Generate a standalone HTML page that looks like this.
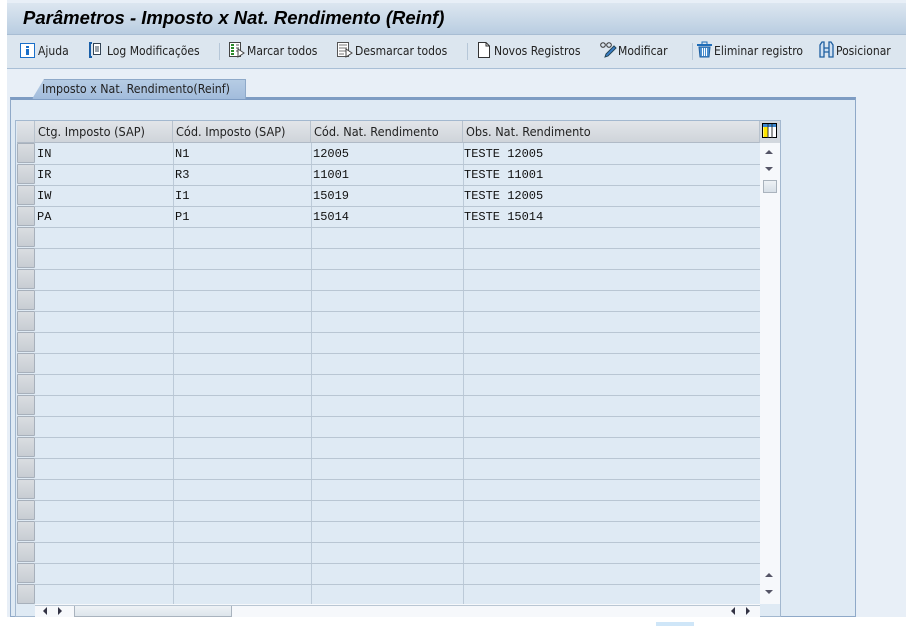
<!DOCTYPE html>
<html><head><meta charset="utf-8">
<style>
*{box-sizing:border-box;margin:0;padding:0}
body{width:906px;height:626px;overflow:hidden;background:#fff;font-family:Tahoma,"DejaVu Sans","Liberation Sans",sans-serif;font-size:12px;color:#222;position:relative}
.abs{position:absolute}
#main{left:7px;top:0;width:899px;height:617px;background:#e8eff7}
#title{left:7px;top:3px;width:899px;height:32px;background:linear-gradient(#dce6f0,#b9cde1);border-bottom:1px solid #a8bdd3}
#title span{position:absolute;left:16px;top:4px;font:bold italic 18.5px "Liberation Sans",sans-serif;color:#000}
#tb{left:7px;top:35px;width:899px;height:34px;background:#dce6ef;border-bottom:1px solid #a9bfd6}
.btn{position:absolute;top:9px;font-size:12px;color:#222;white-space:nowrap;font-family:"DejaVu Sans Condensed","DejaVu Sans",sans-serif}
.sep{position:absolute;top:8px;width:1px;height:17px;background:#b6c7d8}
#tab{left:32px;top:79px;width:214px;height:20px;background:linear-gradient(#b6cce4,#a2bcdc);border:1px solid #8ea9c9;border-bottom:none;clip-path:polygon(12px 0,100% 0,100% 100%,0 100%)}
#tab span{position:absolute;left:9px;top:2px;font-family:"DejaVu Sans Condensed","DejaVu Sans",sans-serif;font-size:12.3px}
#cont{left:10px;top:97px;width:846px;height:520px;background:#dfeaf4;border:1px solid #8fa9c8;border-top:3px solid #7e9cc3}
#grid{left:15px;top:120px;width:766px;height:497px;border:1px solid #a3b8cf;background:#dfeaf4}
.hdr{position:absolute;top:121px;height:22px;background:linear-gradient(#e2e5e9,#cfd4da);border-right:1px solid #b8c2cd;border-bottom:1px solid #b0bac6;font-family:"DejaVu Sans Condensed","DejaVu Sans",sans-serif;font-size:12.6px;padding:3px 0 0 3px;white-space:nowrap;overflow:hidden}
.rh{position:absolute;left:17px;width:18px;height:20px;background:linear-gradient(#dadde1,#c8cdd3);border:1px solid #a7b0bb;border-radius:1px}
.hl{position:absolute;left:35px;width:725px;height:1px;background:#b9c6d3}
.vl{position:absolute;top:143px;width:1px;height:461px;background:#bccad8}
.cell{position:absolute;font:12px "Liberation Mono","DejaVu Sans Mono",monospace;color:#111}
</style></head><body>
<div id="main" class="abs"></div>
<div id="title" class="abs"><span>Parâmetros - Imposto x Nat. Rendimento (Reinf)</span></div>
<div id="tb" class="abs">
 <svg class="abs" style="left:13px;top:8px" width="15" height="15"><rect x="0.5" y="0.5" width="14" height="14" fill="#fff" stroke="#1a6fc9"/><rect x="6" y="3" width="3" height="2" fill="#1a6fc9"/><rect x="6" y="6" width="3" height="6" fill="#1a6fc9"/></svg>
 <div class="btn" style="left:31px">Ajuda</div>
 <svg class="abs" style="left:82px;top:7px" width="13" height="16"><path d="M3 1H1V15H3" fill="none" stroke="#1a5fa8" stroke-width="2"/><rect x="4.5" y="1.5" width="7" height="11" fill="#fff" stroke="#345"/><path d="M6 5h4M6 7h4M6 9h4" stroke="#345"/></svg>
 <div class="btn" style="left:100px">Log Modificações</div>
 <div class="sep" style="left:212px"></div>
 <svg class="abs" style="left:222px;top:7px" width="16" height="16"><rect x="0.5" y="0.5" width="11" height="14" fill="#fff" stroke="#444"/><path d="M2 3h3M2 6h3M2 9h3M2 12h3" stroke="#2a8a2a" stroke-width="2"/><path d="M7 3h3M7 6h3M7 9h3" stroke="#555"/><path d="M9 7l6 4-6 4z" fill="#fff" stroke="#444"/></svg>
 <div class="btn" style="left:240px">Marcar todos</div>
 <svg class="abs" style="left:330px;top:7px" width="16" height="16"><rect x="0.5" y="0.5" width="11" height="14" fill="#fff" stroke="#555"/><path d="M2 3h8M2 6h8M2 9h8M2 12h5" stroke="#777"/><path d="M9 7l6 4-6 4z" fill="#fff" stroke="#444"/></svg>
 <div class="btn" style="left:348px">Desmarcar todos</div>
 <div class="sep" style="left:460px"></div>
 <svg class="abs" style="left:471px;top:7px" width="12" height="16"><path d="M0.5 0.5H8L11.5 4V15.5H0.5Z" fill="#fff" stroke="#333"/><path d="M8 0.5V4H11.5" fill="none" stroke="#333"/></svg>
 <div class="btn" style="left:487px">Novos Registros</div>
 <svg class="abs" style="left:593px;top:6px" width="17" height="17"><circle cx="3" cy="4" r="2.3" fill="none" stroke="#333"/><circle cx="9" cy="4" r="2.3" fill="none" stroke="#333"/><path d="M5 16l1-3 8-8 2 2-8 8z" fill="#3a7fc9" stroke="#245"/></svg>
 <div class="btn" style="left:611px">Modificar</div>
 <div class="sep" style="left:685px"></div>
 <svg class="abs" style="left:689px;top:6px" width="17" height="17"><path d="M1 4h15" stroke="#1f6db8" stroke-width="2"/><path d="M6 3V1h5v2" fill="none" stroke="#1f6db8"/><path d="M3 6h11l-1 10H4z" fill="#4a8fd0" stroke="#1f5fa0"/><path d="M6.5 7v8M8.5 7v8M10.5 7v8" stroke="#fff"/></svg>
 <div class="btn" style="left:707px">Eliminar registro</div>
 <svg class="abs" style="left:812px;top:6px" width="15" height="17"><path d="M1 16V4l2-3h2v15zM10 16V1h2l2 3v12zM5 7h5v4H5z" fill="#cfe0f2" stroke="#1f5fa0" stroke-width="1.3"/></svg>
 <div class="btn" style="left:829px">Posicionar</div>
</div>
<div id="cont" class="abs"></div>
<div id="tab" class="abs"><span>Imposto x Nat. Rendimento(Reinf)</span></div>
<div id="grid" class="abs"></div>
<div class="hdr" style="left:17px;width:18px"></div>
<div class="hdr" style="left:35px;width:138px">Ctg. Imposto (SAP)</div>
<div class="hdr" style="left:173px;width:138px">Cód. Imposto (SAP)</div>
<div class="hdr" style="left:311px;width:152px">Cód. Nat. Rendimento</div>
<div class="hdr" style="left:463px;width:297px">Obs. Nat. Rendimento</div>
<div class="abs" style="left:760px;top:121px;width:20px;height:22px;background:#d3d8de"></div>
<svg class="abs" style="left:762px;top:123px" width="15" height="15"><rect x="0.5" y="0.5" width="14" height="14" fill="#fff" stroke="#000"/><rect x="1" y="1" width="13" height="3" fill="#3a87d0"/><rect x="1.5" y="4" width="4" height="10" fill="#ffe600"/><path d="M6 1v14M10 1v14" stroke="#333"/></svg>
<div class="abs" style="left:760px;top:143px;width:20px;height:461px;background:#f6f8fb"></div>
<svg class="abs" style="left:764px;top:148px" width="10" height="30"><path d="M1 6l4-4 4 4z" fill="#556"/><path d="M1 19l4 4 4-4z" fill="#556"/></svg>
<div class="abs" style="left:763px;top:180px;width:14px;height:13px;border:1px solid #aab3bd;background:linear-gradient(#eef2f6,#d7dfe7)"></div>
<svg class="abs" style="left:764px;top:569px" width="10" height="30"><path d="M1 8l4-4 4 4z" fill="#556"/><path d="M1 21l4 4 4-4z" fill="#556"/></svg>
<div class="abs" style="left:35px;top:604px;width:725px;height:13px;background:#f6f8fb"></div>
<svg class="abs" style="left:40px;top:605px" width="30" height="12"><path d="M7 2l-4 4 4 4z" fill="#334"/><path d="M18 2l4 4-4 4z" fill="#334"/></svg>
<div class="abs" style="left:74px;top:605px;width:158px;height:12px;border:1px solid #a9b3be;background:linear-gradient(#eef2f6,#dde5ec)"></div>
<svg class="abs" style="left:728px;top:605px" width="30" height="12"><path d="M7 2l-4 4 4 4z" fill="#334"/><path d="M18 2l4 4-4 4z" fill="#334"/></svg>
<div class="vl" style="left:173px"></div>
<div class="vl" style="left:311px"></div>
<div class="vl" style="left:463px"></div>
<div id="rows"></div>
<div class="cell" style="left:37px;top:147px">IN</div><div class="cell" style="left:175px;top:147px">N1</div><div class="cell" style="left:313px;top:147px">12005</div><div class="cell" style="left:464px;top:147px">TESTE 12005</div>
<div class="cell" style="left:37px;top:168px">IR</div><div class="cell" style="left:175px;top:168px">R3</div><div class="cell" style="left:313px;top:168px">11001</div><div class="cell" style="left:464px;top:168px">TESTE 11001</div>
<div class="cell" style="left:37px;top:189px">IW</div><div class="cell" style="left:175px;top:189px">I1</div><div class="cell" style="left:313px;top:189px">15019</div><div class="cell" style="left:464px;top:189px">TESTE 12005</div>
<div class="cell" style="left:37px;top:210px">PA</div><div class="cell" style="left:175px;top:210px">P1</div><div class="cell" style="left:313px;top:210px">15014</div><div class="cell" style="left:464px;top:210px">TESTE 15014</div>
<div class="abs" style="left:656px;top:622px;width:38px;height:4px;background:#cfe6f8"></div>
<script>
var h='';for(var i=0;i<22;i++){var y=143+i*21;h+='<div class="rh" style="top:'+y+'px"></div><div class="hl" style="top:'+(y+21)+'px"></div>';}
document.getElementById('rows').innerHTML=h;
</script>
</body></html>
